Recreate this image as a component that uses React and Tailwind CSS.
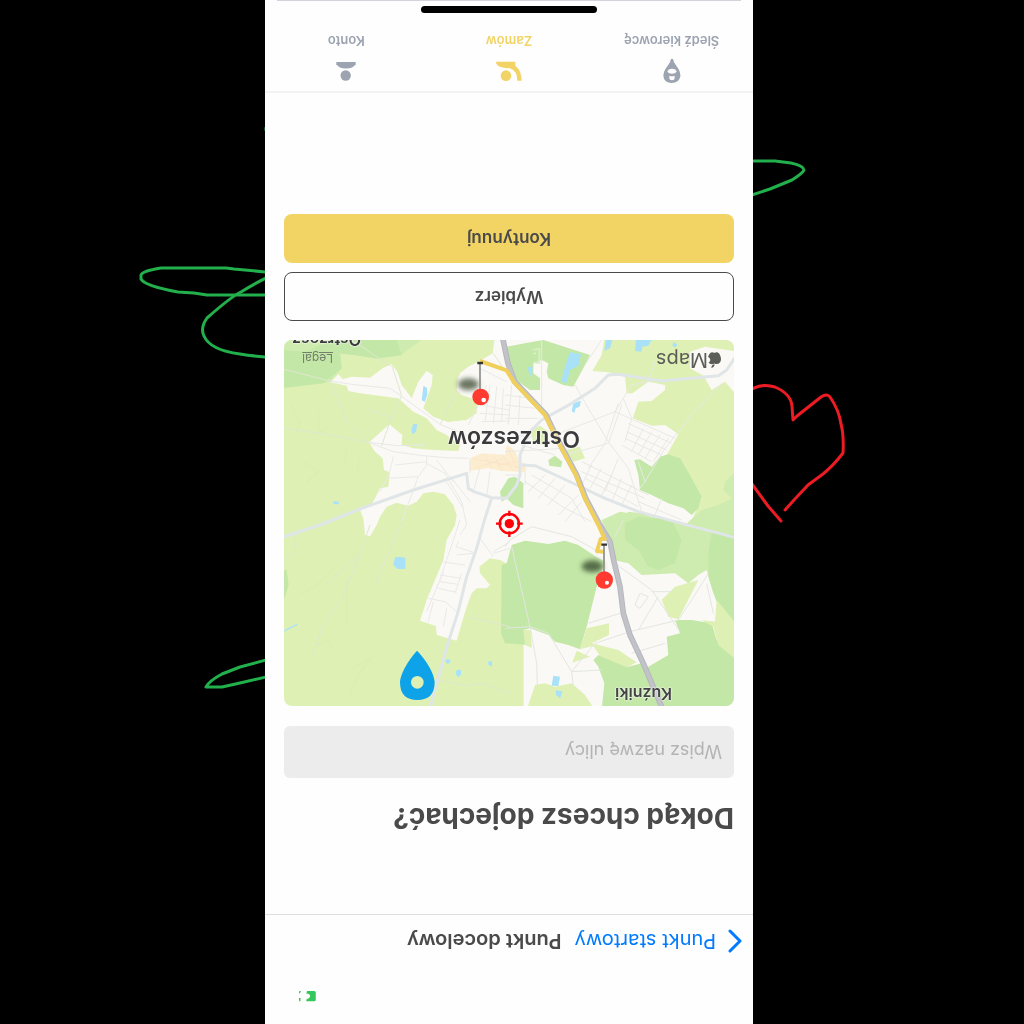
const LAND = "#dff0b5";
const MEADOW = "#cfecb0";
const FOREST = "#c3e7a7";
const WATER = "#a9e1f8";
const TOWN = "#faf9f5";

function DoodleLeft() {
  return (
    <svg aria-hidden="true" className="h-full w-full" viewBox="0 0 265 1024" preserveAspectRatio="none" fill="none" stroke="#22b04c" strokeWidth="3" strokeLinecap="round" strokeLinejoin="round">
      <path d="M266 128V130" />
      <path d="M266 272L234 269L226 268H161Q142 271 141 275V279Q145 286 178 292L194 293L207 295H266" />
      <path d="M266 278Q252 285 241 292Q232 296 207 318Q200 328 204 336Q210 350 240 354Q252 356 266 357" />
      <path d="M266 660L240 667L222 674Q209 681 206 687H222L240 683L266 677" />
    </svg>
  );
}

function DoodleRight() {
  return (
    <svg aria-hidden="true" className="h-full w-full" viewBox="0 0 271 1024" preserveAspectRatio="none" fill="none" strokeWidth="3" strokeLinecap="round" strokeLinejoin="round">
      <path stroke="#22b04c" d="M-1 161H22L38 163Q51 166 51 170Q50 173 39 180L17 189L-1 195" />
      <path stroke="#ed1c24" d="M-1 389Q10 383 22 387Q38 394 39 406L40 420L44 416L68 397Q74 393 77 397Q86 410 88 424Q91 435 90 453Q80 466 70 474L55 485L41 500L32 510" />
      <path stroke="#ed1c24" d="M-1 484L15 506Q22 514 28 521" />
    </svg>
  );
}

function MapArt() {
  return (
    <svg aria-hidden="true" className="block h-full w-full" viewBox="12 15 1350 1098" preserveAspectRatio="xMidYMid slice">
      <defs>
        <filter id="soft" x="-50%" y="-50%" width="200%" height="200%"><feGaussianBlur stdDeviation="8" /></filter>
      </defs>
      <g transform="rotate(180 687 564)">
        <rect x="0" y="0" width="1380" height="1130" fill={TOWN} />
        {/* western fields */}
        <path fill={LAND} d="M0 0H645L638 55L600 78L560 100L535 125L530 165L545 180L575 190L592 210L590 235L560 255L500 262V300L540 330L535 348L460 345L400 340L365 330L367 300L328 268L268 322L285 350L308 370L312 405L330 412L325 455L300 460L285 490L270 515L238 520L250 550L255 600L270 604L290 570L300 545L320 515L350 503L385 512L410 500L430 475L460 470L495 478L520 510L530 540L525 570L500 615L490 675L465 735L440 795L420 857L468 873L470 900L530 917L545 865L560 815L575 775L590 760H620L630 750L600 715L598 695L630 670L660 675L690 690V900L730 915V1130H0Z" />
        <path fill={MEADOW} d="M0 0H440L425 15L360 62L290 72L230 60L180 55L185 100L150 140L130 145L12 160H0Z" />
        <path fill={FOREST} d="M0 45L80 50L150 15H350L365 60L290 70L180 55L185 100L130 145L0 160ZM0 705L20 705L26 750L12 795H0Z" />
        <path fill={TOWN} d="M152 142L175 118L188 133L215 125L270 128L310 98L335 88L352 110L365 150L395 190L415 140L440 107L458 120L455 150L430 220L460 245L505 262L560 255V330H540L500 300L470 285L440 250L400 230L355 190L320 185L240 175L205 168L200 152Z" />
        <path fill={TOWN} d="M640 55L605 75L565 95L540 115L530 150L545 178L575 188L600 190L650 120Z" />
        <g fill={WATER}>
          <path d="M430 153L441 158L442 180L434 200L425 196ZM400 266L412 268L408 290L398 298L394 285ZM160 499L177 500L176 508L162 508ZM345 667L358 665L376 668V702H352L340 690ZM495 975L506 972L513 980L502 988ZM530 1005H543V1020L534 1026L527 1018ZM626 978L637 980L635 995L624 988Z" />
        </g>
        <path d="M12 888L52 868" stroke={WATER} strokeWidth="4" />
        <g fill="none" stroke="#d6eaae" strokeWidth="5" opacity="0.4">
          <path d="M35 210L60 260L48 300M115 230L120 290L150 270M70 380L115 410L80 440M200 335L190 400M240 370L230 420M60 780Q110 760 160 700M200 735V870M220 1000L275 965L235 1020L210 1080M110 930L145 915L155 940" />
        </g>

        <g transform="translate(675 0)">
          <path fill={FOREST} d="M5 35L60 25L115 15L255 60L240 90L205 155L175 150L130 130L125 110L130 85L110 75L85 85V115L105 130V165L75 165L40 140L15 110L5 60Z" />
          <path fill={LAND} d="M300 0H700V50L600 35L555 50V100L595 122L620 165L660 140L690 175V600H540L590 490L560 440L520 370L485 360L520 298L480 270L440 272L383 250L400 200L440 198L480 165L480 150L430 140L382 175H365L360 125L310 112L262 108L290 60Z" />
          <path fill={LAND} d="M75 285L105 272L130 290L120 330L85 325ZM180 345L225 335L240 370L205 380Z" />
          <path fill={MEADOW} d="M700 400L660 440L655 465L680 490L640 510L590 525L540 570L500 580L430 560L440 538L370 530L320 570L290 600H700Z" />
          <path fill={FOREST} d="M388 375L405 373L440 395L465 365L490 358L525 370L555 420L590 485L580 520L560 540L535 520L490 505L440 480L405 465L400 420ZM130 375L150 362L172 380L168 397L133 392ZM-15 470L10 430L30 425L55 445V520L25 510L5 490L-10 500Z" />
          <path fill={WATER} d="M195 52L228 58L220 92L195 105L185 143L168 140L180 95ZM67 97L82 95V115L75 123ZM205 205L228 197L224 215L212 220L208 234L200 228ZM303 15H322L315 40L298 48ZM393 15H440L430 32L412 35L410 50L390 48ZM505 22L517 28L512 38L502 32Z" />
          <path fill="#fdedd0" d="M-105 370L-70 355L0 360L5 330L28 345L45 380L65 388L62 412L-10 408L-50 400L-108 408Z" />
          <g fill="none" stroke="#f8e3bf" strokeWidth="2"><path d="M-100 370L60 400M-60 357L-40 400M-35 357L-10 407M-10 357L25 408M10 340L35 400M-90 400L0 370M-20 390L40 380" /></g>
        </g>

        <g transform="translate(675 555)">
          <path fill={MEADOW} d="M290 0L345 -25L500 0L700 45V330L640 260L605 150L580 165L550 190L510 160L410 165L370 130L325 120L310 70Z" />
          <path fill={FOREST} d="M360 10L400 -10L500 0L530 60L510 130L460 150L430 140L400 90L360 60ZM610 100L620 40L700 45V330L650 280L625 220L610 170Z" />
          <path fill={FOREST} d="M20 75L60 62L130 72L180 62L220 75L270 108L300 125L275 200L245 320L225 388L190 375L150 365L130 345L75 325L55 330L70 375L0 370L-12 340L-10 135L5 130Z" />
          <path fill={FOREST} d="M510 300L560 300L620 310L635 360L700 425V570H290L298 490L280 440L265 420L280 405L370 440L410 430L430 440L490 405L485 350L525 340Z" />
          <path fill={LAND} d="M470 240L510 200L580 180L560 220L520 298L490 290ZM590 300L630 305L635 240L660 270L700 320V425L640 375L625 320ZM245 325L312 310V345L260 370L340 390L395 427L365 442L285 408L265 378L225 388ZM215 392L255 410L202 428ZM65 570L90 495L120 490L150 500L200 490L240 525L270 570ZM-30 375L55 375V570H-30ZM55 330L78 330L80 384L60 375Z" />
          <path fill={WATER} d="M145 467L165 470L160 498L140 497ZM152 511L172 514L166 535L153 525Z" />
        </g>

        {/* side streets through the fields */}
        <g fill="none" stroke="#dfe7cf" strokeWidth="3">
          <path d="M12 103L150 138L200 260L260 320M12 280L140 298L265 322M335 90L365 182L330 260L305 332M215 15L330 92M270 225L335 248M640 55L690 130M530 165L480 270" />
          <path d="M12 680L40 650L50 595M235 660L145 745M270 570L235 670L185 790L125 880L98 965M365 560L325 655L285 750M560 845L690 875M475 1035L560 1052L610 1045L690 1075" />
        </g>
        {/* side streets in town */}
        <g fill="none" stroke="#e9e9e8" strokeWidth="3">
          <path d="M150 138L215 148L330 160L362 182L480 268L560 300M260 320L340 350L430 362L500 368L565 370M265 322L350 332L440 330M600 100L680 140M565 270L600 200L620 150" />
          <path d="M340 365L328 415L300 470M440 365V390L415 425L365 560M440 385L495 415L545 500L560 570L540 600M345 390L440 380M320 430L415 425M500 440L550 520M515 430L570 500M470 375L520 440" />
          <path d="M600 210L690 225M600 235L690 240M605 260L690 258M630 150L615 260M650 155L640 265M670 160L665 260M570 370V415M600 400L580 470M630 410L620 485" />
          <path d="M530 660L580 655M535 620L528 635L580 652M485 680L555 690M480 720L545 730M480 740L535 748M475 760L530 772M490 710L470 760M545 715L525 775M445 790L495 800L530 830M460 800L445 860M500 820L490 875M640 655L690 640M600 610L640 665M690 620L640 650M540 555L480 735L440 830" />
        </g>
        <g transform="translate(675 0)" fill="none" stroke="#e8e8e5" strokeWidth="3">
          <path d="M110 15V230M210 150L250 220L310 320L370 400L410 530M150 300L330 230L380 150L430 140L450 80M180 360L310 325L350 210M340 205L300 325L250 400M330 230L510 310M355 190L380 250L360 320M370 265L500 325M365 290L485 345M360 310L470 360M350 330L440 380M415 280L380 350M440 290L400 360M465 300L420 370M490 310L445 380M400 380L420 440L405 460M650 145L560 240L480 340L420 440M240 90L290 15" />
          <path d="M230 380L430 480M230 410L420 490M240 430L400 515M260 390L230 450M290 400L255 460M320 420L290 480M350 430L320 500M380 450L350 510M340 370L300 470M60 440L180 520L260 560M80 420L200 490L240 560M70 470L120 420M100 490L150 430M130 510L180 450M160 540L220 480M180 560L230 500M400 500L530 555M470 490L450 540M50 330L150 360M30 300L100 310M-20 310L20 320M0 180L80 190M0 210L90 220M0 250L100 250M20 150L10 270M45 180L40 270M0 350L180 340M60 410V450M0 420H50" />
        </g>
        <g transform="translate(675 555)" fill="none" stroke="#e3e6e1" strokeWidth="3">
          <path d="M0 80L15 60L80 20L200 50L290 100M20 80L75 320M0 325L75 320L95 430L97 495M75 320L130 340L200 455L290 450M200 455L205 500M200 455L270 370L375 335L520 300M250 310L345 280M330 130L440 210L525 335M405 220L430 230L405 265L390 255ZM460 230L400 330M440 215L500 215M610 160L560 240L520 300M300 15L275 105M380 400L480 370M355 0L330 50M605 190L625 280" />
        </g>
        {/* main roads */}
        <g fill="none" stroke="#e0e5e7" strokeWidth="9" strokeLinejoin="round">
          <path d="M0 609L120 570L240 522L400 465L560 415L565 460L582 470L635 488L680 490L710 450L720 420V360L750 290L785 255L875 205L945 160L985 120L1015 118L1145 138L1315 122L1340 105L1370 60" />
          <path d="M725 390L765 392L865 438L975 490L1075 530L1215 568L1370 609M635 488L612 560L590 640L560 725L533 835L505 920L450 1120" />
        </g>
        <path d="M666 0L684 85L704 140L797 238L822 290L847 340L890 420L917 490L957 565L990 620L1002 680L1020 755L1030 835L1050 900L1090 985L1147 1120" fill="none" stroke="#b6b7bd" strokeWidth="17" strokeLinejoin="round" />
        <path d="M666 0L684 85L704 140L797 238L822 290L847 340L890 420L917 490L957 565L990 620L1002 680L1020 755L1030 835L1050 900L1090 985L1147 1120" fill="none" stroke="#c2c3c9" strokeWidth="11" strokeLinejoin="round" />
        <path d="M600 78L680 106L702 142L795 240L820 291L845 341L888 421L915 491L955 570L974 612L962 612L951 648L970 650" fill="none" stroke="#f1cf5b" strokeWidth="12" strokeLinejoin="round" />
        <path d="M758 45L778 42V84L760 82M760 55H768" fill="none" stroke="#d9efc8" strokeWidth="5" />

        <g>
          <ellipse cx="565" cy="148" rx="31" ry="18" fill="#53604a" opacity="0.85" filter="url(#soft)" />
          <path d="M600 85V165" stroke="#8c8e8b" strokeWidth="5" />
          <path d="M592 84H609" stroke="#343434" strokeWidth="7" />
          <circle cx="602" cy="186" r="25" fill="#ff3a30" /><circle cx="611" cy="195" r="7" fill="#fff" />
          <ellipse cx="937" cy="694" rx="32" ry="18" fill="#425838" opacity="0.85" filter="url(#soft)" />
          <path d="M972 630V712" stroke="#8c8e8b" strokeWidth="5" />
          <path d="M964 629H981" stroke="#343434" strokeWidth="7" />
          <circle cx="973" cy="735" r="26" fill="#ff3a30" /><circle cx="981" cy="743" r="6" fill="#fff" />
        </g>
        <g stroke="#ff0008" strokeWidth="7" fill="none">
          <circle cx="688" cy="566" r="29" />
          <path d="M688 527V543M688 589V606M648 566H665M711 566H728" />
          <circle cx="688" cy="566" r="14" fill="#ff0008" stroke="none" />
        </g>
        <path fill="#0ea2e8" fillRule="evenodd" d="M411 947C421 956 463 1005 464 1042Q464 1095 412 1095Q360 1095 360 1042C362 1005 402 956 411 947ZM412 1023A19 19 0 1 0 412 1061A19 19 0 1 0 412 1023Z" />
      </g>
    </svg>
  );
}

function TrackIcon() {
  return (
    <svg aria-hidden="true" className="h-6 w-5" viewBox="1193 176 60 72">
      <g transform="rotate(180 1223 212)">
        <path fill="#9ca3b1" fillRule="evenodd" d="M1219 178Q1223 173 1227 178L1229 186L1243 207Q1249 218 1248 228Q1245 248 1222 248Q1199 248 1197 226Q1197 216 1203 207L1217 186ZM1209 213Q1211 220 1223 220Q1235 220 1237 213Q1235 206 1223 205Q1211 206 1209 213ZM1215 226V234Q1215 240 1223 240Q1231 240 1231 234V226Q1223 230 1215 226Z" />
      </g>
    </svg>
  );
}

function OrderIcon() {
  return (
    <svg aria-hidden="true" className="h-6 w-7" viewBox="692 176 84 72">
      <g transform="rotate(180 734 212)" fill="#f2d365">
        <circle cx="725" cy="226" r="16" />
        <path d="M695 184H753V196Q772 211 772 241H759Q759 212 737 204Q695 202 695 184Z" />
      </g>
    </svg>
  );
}

function AccountIcon() {
  return (
    <svg aria-hidden="true" className="h-6 w-5" viewBox="214 176 62 72">
      <g transform="rotate(180 245 212)" fill="#9ca3b1">
        <circle cx="244" cy="226" r="16" />
        <path d="M215 184H275V191Q267 204 245 204Q223 204 215 191Z" />
      </g>
    </svg>
  );
}

function AppleMark() {
  return (
    <svg aria-hidden="true" className="h-4 w-[13px]" viewBox="0 0 13 16" fill="#5b5d58">
      <path d="M6.5 4.6C8.3 3.6 11 3.4 12.4 5.4C10 6.8 10.2 10 12.9 11.1C12.2 13.4 10.8 15.8 9.2 15.8C8.2 15.8 7.8 15.2 6.6 15.2C5.400 15.2 5 15.8 4 15.8C2 15.8 0 12 0 8.800C0 4.800 3.500 3 6.500 4.600ZM6.400 3.700C6.300 1.800 7.800 0.200 9.600 0C9.800 2 8.200 3.700 6.400 3.700Z" />
    </svg>
  );
}

const tabs = [
  { label: "Śledź kierowcę", Icon: TrackIcon, active: false },
  { label: "Zamów", Icon: OrderIcon, active: true },
  { label: "Konto", Icon: AccountIcon, active: false },
];

export default function App() {
  return (
    <div className="grid min-h-screen grid-cols-[265fr_488fr_271fr] overflow-hidden bg-black font-['Inter',sans-serif]">
      <div className="min-w-0"><DoodleLeft /></div>

      <div className="flex min-w-0 rotate-180 flex-col bg-[#fefefe] text-[#4a4a4a]">
        <header className="border-b border-[#dfdfdf]">
          <div className="flex h-14 items-center justify-end pr-8">
            <svg aria-hidden="true" className="h-3 w-5" viewBox="96 840 60 37">
              <g transform="rotate(180 126 858.5)" fill="#34c759">
                <path d="M126 843H148Q153 843 153 848V870Q153 875 148 875H124V869L133 865L136 858L132 852L124 851Z" />
                <path d="M102 843H107L104 851L101 849ZM101 865H106V875H102Z" />
              </g>
            </svg>
          </div>
          <nav className="flex h-[53px] items-center pl-[11px]">
            <a href="#start" className="flex items-center text-[#007aff]">
              <svg aria-hidden="true" className="mr-3 h-6 w-[14px]" viewBox="0 0 14 24" fill="none" stroke="currentColor" strokeWidth="3" strokeLinecap="round" strokeLinejoin="round">
                <path d="M12 2L2 12L12 22" />
              </svg>
              <span className="text-xl whitespace-nowrap">Punkt startowy</span>
            </a>
            <span className="ml-[13px] text-xl font-semibold whitespace-nowrap">Punkt docelowy</span>
          </nav>
        </header>

        <main className="flex flex-col px-[19px] pt-20">
          <h1 className="text-[28px] leading-8 font-bold whitespace-nowrap">Dokąd chcesz dojechać?</h1>
          <input
            type="text"
            aria-label="Nazwa ulicy"
            placeholder="Wpisz nazwę ulicy"
            className="mt-6 h-[52px] w-full rounded-md bg-[#ececec] px-3 text-lg placeholder:text-[#b4b4b4]"
          />
          <section aria-label="Mapa" className="relative mt-5 h-[366px] overflow-hidden rounded-lg">
            <MapArt />
            <span className="absolute top-[2px] left-[62px] text-base leading-5 font-semibold text-[#444] [text-shadow:0_0_2px_#fff,0_0_2px_#fff]">Kuźniki</span>
            <span className="absolute top-[253px] left-[154px] text-[23px] leading-7 font-semibold text-[#3b3b3d] [text-shadow:0_0_2px_#fff,0_0_2px_#fff]">Ostrzeszów</span>
            <span className="absolute top-[334px] left-[13px] flex items-center text-xl leading-6 text-[#5b5d58]"><AppleMark />Maps</span>
            <a href="#legal" className="absolute top-[338px] left-[401px] text-xs leading-5 text-[#72826a] underline">Legal</a>
            <span className="absolute top-[356px] left-[373px] text-base leading-5 font-semibold text-[#3b3b3d] [text-shadow:0_0_2px_#fff,0_0_2px_#fff]">Ostrzesz</span>
          </section>
          <button type="button" className="mt-[19px] h-[49px] rounded-lg border border-[#4a4a4a] text-[17px] font-semibold">Wybierz</button>
          <button type="button" className="mt-[9px] h-[49px] rounded-lg bg-[#f2d465] text-[17px] font-semibold">Kontynuuj</button>
        </main>

        <footer className="mt-auto border-t-2 border-[#f3f3f3]">
          <nav className="grid grid-cols-3 pt-2">
            {tabs.map(({ label, Icon, active }) => (
              <button
                key={label}
                type="button"
                className={
                  active
                    ? "flex flex-col items-center gap-2 text-[13px] leading-5 font-semibold text-[#f2d365]"
                    : "flex flex-col items-center gap-2 text-[13px] leading-5 font-semibold text-[#9ca3b1]"
                }
              >
                <Icon />
                {label}
              </button>
            ))}
          </nav>
          <div className="mx-auto mt-[18px] mb-[5px] h-[7px] w-[176px] rounded-full bg-black" />
          <div className="mx-3 h-px bg-[#d1d5db]" />
        </footer>
      </div>

      <div className="min-w-0"><DoodleRight /></div>
    </div>
  );
}
